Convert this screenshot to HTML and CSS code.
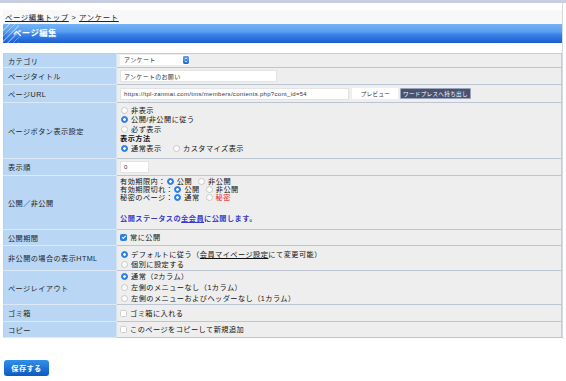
FILE: index.html
```html
<!DOCTYPE html>
<html lang="ja">
<head>
    <meta charset="UTF-8">
    <meta name="viewport" content="width=device-width, initial-scale=1.0">
    <title>ページ編集</title>
    <link rel="stylesheet" href="styles.css">
</head>
<body>
    <div class="topbar"></div>
    <div class="wrap">
        <div class="crumb"><a href="#">ページ編集トップ</a> &gt; <a href="#">アンケート</a></div>
        <h2 class="title-bar">ページ編集</h2>

        <table class="form">
            <tr>
                <th>カテゴリ</th>
                <td class="tight">
                    <span class="select">
                        <select><option>アンケート</option></select>
                        <svg class="select-icon" viewBox="0 0 6 8" width="6" height="8">
                            <defs>
                                <linearGradient id="sel" x1="0" y1="0" x2="0" y2="1">
                                    <stop offset="0" stop-color="#5aa2f4"/>
                                    <stop offset="1" stop-color="#1c66dc"/>
                                </linearGradient>
                            </defs>
                            <rect x="0" y="0" width="6" height="8" rx="1.4" fill="url(#sel)"/>
                            <path d="M1.6 3.3 L3 1.9 L4.4 3.3 M1.6 4.7 L3 6.1 L4.4 4.7" fill="none" stroke="#fff" stroke-width="0.8"/>
                        </svg>
                    </span>
                </td>
            </tr>
            <tr>
                <th>ページタイトル</th>
                <td><input type="text" class="in-title" value="アンケートのお願い"></td>
            </tr>
            <tr>
                <th>ページURL</th>
                <td class="url">
                    <input type="text" class="in-url" value="https://tpl-zanmai.com/tms/members/contents.php?cont_id=54">
                    <button class="btn-preview">プレビュー</button>
                    <button class="btn-wp">ワードプレスへ持ち出し</button>
                </td>
            </tr>
            <tr>
                <th>ページボタン表示設定</th>
                <td class="btns">
                    <label class="opt"><input type="radio" name="pbtn">非表示</label>
                    <label class="opt"><input type="radio" name="pbtn" checked>公開/非公開に従う</label>
                    <label class="opt"><input type="radio" name="pbtn">必ず表示</label>
                    <div class="sub">表示方法</div>
                    <div class="opt">
                        <label><input type="radio" name="pmode" checked>通常表示</label>
                        <label class="gap"><input type="radio" name="pmode">カスタマイズ表示</label>
                    </div>
                </td>
            </tr>
            <tr>
                <th>表示順</th>
                <td><input type="text" class="in-order" value="0"></td>
            </tr>
            <tr>
                <th>公開／非公開</th>
                <td class="pub">
                    <div>有効期限内：<label><input type="radio" name="p1" checked>公開</label><label class="near"><input type="radio" name="p1">非公開</label></div>
                    <div>有効期限切れ：<label><input type="radio" name="p2" checked>公開</label><label class="near"><input type="radio" name="p2">非公開</label></div>
                    <div>秘密のページ：<label><input type="radio" name="p3" checked>通常</label><label class="near"><input type="radio" name="p3"><span class="secret">秘密</span></label></div>
                    <div class="notice">公開ステータスの<u>全会員</u>に公開します。</div>
                </td>
            </tr>
            <tr>
                <th>公開期間</th>
                <td><label><input type="checkbox" checked>常に公開</label></td>
            </tr>
            <tr>
                <th>非公開の場合の表示HTML</th>
                <td class="html">
                    <label class="opt"><input type="radio" name="hid" checked>デフォルトに従う（<u>会員マイページ設定</u>にて変更可能）</label>
                    <label class="opt"><input type="radio" name="hid">個別に設定する</label>
                </td>
            </tr>
            <tr>
                <th>ページレイアウト</th>
                <td class="layout">
                    <label class="opt"><input type="radio" name="lay" checked>通常（2カラム）</label>
                    <label class="opt"><input type="radio" name="lay">左側のメニューなし（1カラム）</label>
                    <label class="opt"><input type="radio" name="lay">左側のメニューおよびヘッダーなし（1カラム）</label>
                </td>
            </tr>
            <tr>
                <th>ゴミ箱</th>
                <td class="trash"><label><input type="checkbox">ゴミ箱に入れる</label></td>
            </tr>
            <tr>
                <th>コピー</th>
                <td><label><input type="checkbox">このページをコピーして新規追加</label></td>
            </tr>
        </table>
    </div>

    <div class="actions">
        <button class="save">保存する</button>
    </div>
</body>
</html>
```

FILE: styles.css
```css
body {
    margin: 0;
    font-family: "Liberation Sans", "Noto Sans CJK JP", sans-serif;
    color: #222;
    background-color: #fff;
}

.topbar {
    height: 3px;
    background-color: #c9cfe1;
}

.wrap {
    width: 559px;
    padding: 0 0 1px 3px;
    border-right: 1px solid #d5dae3;
}

.crumb {
    padding: 8px 0 0 2px;
    height: 13px;
    line-height: 13px;
    font-size: 7.4px;
    letter-spacing: 0.6px;
    background: linear-gradient(#fff 7px, #f8f8f9 7px);
}

.crumb a {
    color: #222;
}

.title-bar {
    position: relative;
    margin: 0;
    height: 19px;
    line-height: 19px;
    padding-left: 10px;
    font-size: 8.4px;
    letter-spacing: 0.4px;
    font-weight: bold;
    color: #fff;
    background: linear-gradient(#74b3f4 0%, #5a9ff0 40%, #3a84e6 55%, #1a5cd2 100%);
}

.title-bar::before {
    content: "";
    position: absolute;
    left: 0;
    top: 0;
    width: 16px;
    height: 19px;
    background: repeating-linear-gradient(135deg, rgba(255, 255, 255, 0.35) 0 1px, transparent 1px 4px);
}

/* フォーム表 */
.form {
    width: 559px;
    margin-top: 10px;
    border-collapse: collapse;
    border: 1px solid #c5cdd8;
}

.form th {
    width: 104px;
    padding: 0 4px;
    text-align: left;
    font-weight: normal;
    font-size: 7.2px;
    letter-spacing: 0.4px;
    color: #1e1e1e;
    background-color: #b9d6f4;
    border-bottom: 1px solid #dce8f6;
    border-right: 1px solid #d4e2f1;
}

.form td {
    padding: 2px 3px;
    font-size: 7.2px;
    letter-spacing: 0.45px;
    line-height: 11px;
    color: #111;
    background-color: #eeeeee;
    border-bottom: 1px solid #bcc5d1;
}

.form td.tight {
    padding: 1px 3px;
}

.form td.url {
    padding: 3px 3px 2px;
}

.form td.btns {
    padding: 3px 3px 5px;
    line-height: 9.4px;
}

.form td.pub {
    padding: 2px 3px 6px;
    line-height: 8px;
}

.form td.html {
    padding: 4px 3px 1px;
    line-height: 9.5px;
}

.form td.layout {
    padding: 0 3px;
    line-height: 11px;
}

.form td.trash {
    padding: 3px 3px 2px;
}

.opt {
    display: block;
}

.sub {
    font-weight: bold;
}

.gap {
    margin-left: 8px;
}

.near {
    margin-left: 5px;
}

.secret {
    color: #e42424;
}

.notice {
    margin-top: 12px;
    line-height: 9px;
    font-weight: bold;
    color: #3b3cc9;
}

/* 入力欄 */
.select {
    display: inline-flex;
    align-items: center;
    height: 10px;
    width: 70px;
    background-color: #fff;
    vertical-align: top;
}

.select select {
    appearance: none;
    flex: 1;
    height: 10px;
    padding: 0 4px;
    border: none;
    background: transparent;
    font-family: inherit;
    font-size: 6px;
    letter-spacing: 0.4px;
    color: #333;
}

.select-icon {
    margin-right: 1px;
}

input[type="text"] {
    box-sizing: border-box;
    height: 12px;
    padding: 0 3px;
    border: 1px solid #e3e3e3;
    background-color: #fff;
    font-family: inherit;
    font-size: 6px;
    letter-spacing: 0.3px;
    color: #333;
    vertical-align: top;
}

.in-title {
    width: 157px;
}

.in-url {
    width: 229px;
    font-size: 6.2px;
    letter-spacing: 0;
}

.in-order {
    width: 29px;
}

button {
    font-family: inherit;
    cursor: pointer;
}

.btn-preview,
.btn-wp {
    box-sizing: border-box;
    height: 11px;
    padding: 0 2px;
    font-size: 5.6px;
    letter-spacing: 0.3px;
    vertical-align: top;
    white-space: nowrap;
}

.btn-preview {
    width: 46px;
    margin-left: 1px;
    border: none;
    background-color: #fff;
    color: #333;
}

.btn-wp {
    width: 71px;
    margin-left: -1px;
    border: 1px solid #9aa3bc;
    border-radius: 1px;
    background-color: #49526f;
    color: #fff;
}

input[type="radio"] {
    appearance: none;
    box-sizing: border-box;
    width: 7px;
    height: 7px;
    margin: 0 3px 0 1px;
    border: 1px solid #c8c8c8;
    border-radius: 50%;
    background-color: #fff;
    vertical-align: -1px;
}

input[type="radio"]:checked {
    border-color: #2b7de9;
    background: radial-gradient(circle, #fff 0 1.1px, #2b7de9 1.6px);
}

input[type="checkbox"] {
    appearance: none;
    position: relative;
    box-sizing: border-box;
    width: 7px;
    height: 7px;
    margin: 0 3px 0 0;
    border: 1px solid #cfcfcf;
    border-radius: 1.5px;
    background-color: #fff;
    vertical-align: -1px;
}

input[type="checkbox"]:checked {
    border-color: #2b7de9;
    background-color: #2b7de9;
}

input[type="checkbox"]:checked::after {
    content: "";
    position: absolute;
    left: 1.6px;
    top: 0.2px;
    width: 1.4px;
    height: 3px;
    border: solid #fff;
    border-width: 0 1px 1px 0;
    transform: rotate(45deg);
}

/* 保存ボタン */
.actions {
    padding: 21px 0 0 4px;
}

.save {
    display: block;
    height: 16px;
    width: 45px;
    padding: 0;
    border: none;
    border-radius: 3px;
    background: linear-gradient(#3290ea, #0c58c2);
    box-shadow: 0 1px 1px rgba(0, 0, 0, 0.2);
    color: #fff;
    font-size: 7.2px;
    letter-spacing: 0.4px;
    font-weight: bold;
}
```
